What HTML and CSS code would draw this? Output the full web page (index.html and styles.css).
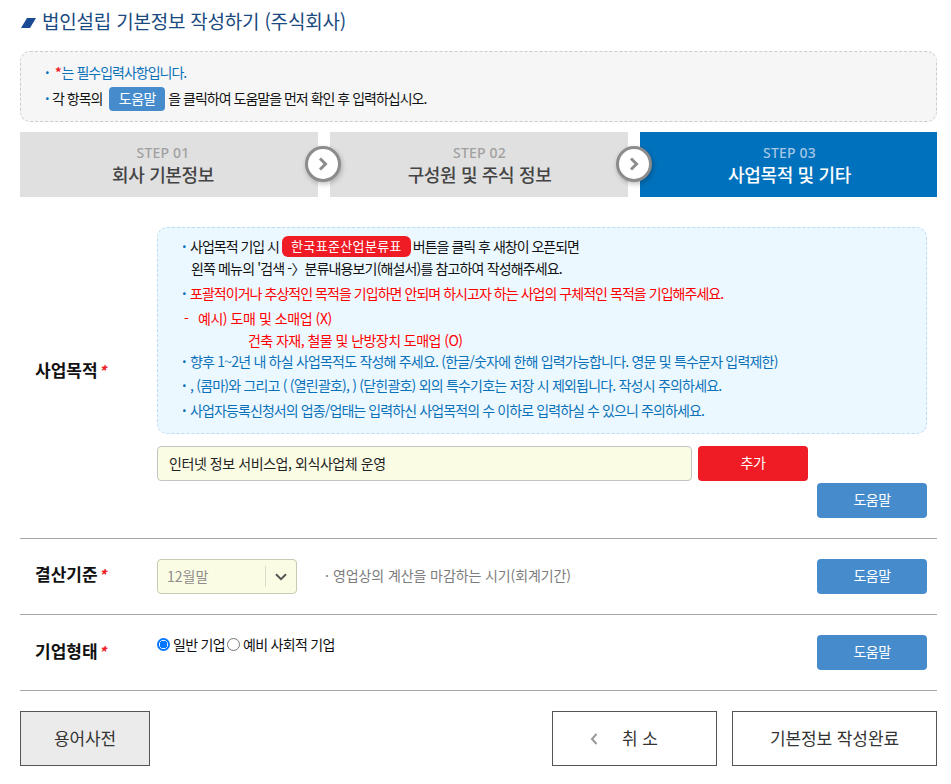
FILE: index.html
```html
<!DOCTYPE html>
<html lang="ko">
<head>
<meta charset="utf-8">
<title>법인설립 기본정보 작성하기</title>
<link rel="stylesheet" href="styles.css">
</head>
<body>
<main class="page">
  <h1 class="title"><svg class="title-mark" width="15" height="10" viewBox="0 0 15 10"><polygon points="0,10 6,0 15,0 9,10" fill="#1a4a94"/></svg>법인설립 기본정보 작성하기 (주식회사)</h1>

  <section class="notice">
    <p class="notice-line blue"><span class="dot">·</span><span class="star">*</span>는 필수입력사항입니다.</p>
    <p class="notice-line"><span class="dot blue">·</span>각 항목의 <span class="chip">도움말</span> 을 클릭하여 도움말을 먼저 확인 후 입력하십시오.</p>
  </section>

  <ol class="steps">
    <li class="step first"><span class="step-no">STEP 01</span><strong class="step-name">회사 기본정보</strong>
      <span class="step-arrow"><svg width="12" height="14" viewBox="0 0 12 14"><path d="M3 1.5 8.5 7 3 12.5" fill="none" stroke="#8c8c8c" stroke-width="3"/></svg></span></li>
    <li class="step second"><span class="step-no">STEP 02</span><strong class="step-name">구성원 및 주식 정보</strong>
      <span class="step-arrow"><svg width="12" height="14" viewBox="0 0 12 14"><path d="M3 1.5 8.5 7 3 12.5" fill="none" stroke="#8c8c8c" stroke-width="3"/></svg></span></li>
    <li class="step active"><span class="step-no">STEP 03</span><strong class="step-name">사업목적 및 기타</strong></li>
  </ol>

  <section class="row row-purpose">
    <div class="label">사업목적<span class="req">*</span></div>
    <div class="field">
      <div class="guide">
        <p class="g g1"><span class="dot blue">·</span>사업목적 기입 시 <span class="redchip">한국표준산업분류표</span> 버튼을 클릭 후 새창이 오픈되면</p>
        <p class="g g2 indent">왼쪽 메뉴의 '검색 -〉분류내용보기(해설서)를 참고하여 작성해주세요.</p>
        <p class="g g3 red"><span class="dot blue">·</span>포괄적이거나 추상적인 목적을 기입하면 안되며 하시고자 하는 사업의 구체적인 목적을 기입해주세요.</p>
        <p class="g g4 red"><span class="dash">-</span>예시) 도매 및 소매업 (X)</p>
        <p class="g g5 red deep">건축 자재, 철물 및 난방장치 도매업 (O)</p>
        <p class="g g6 blue"><span class="dot">·</span>향후 1~2년 내 하실 사업목적도 작성해 주세요. (한글/숫자에 한해 입력가능합니다. 영문 및 특수문자 입력제한)</p>
        <p class="g g7 blue"><span class="dot">·</span>, (콤마)와 그리고 ( (열린괄호), ) (닫힌괄호) 외의 특수기호는 저장 시 제외됩니다. 작성시 주의하세요.</p>
        <p class="g g8 blue"><span class="dot">·</span>사업자등록신청서의 업종/업태는 입력하신 사업목적의 수 이하로 입력하실 수 있으니 주의하세요.</p>
      </div>
      <div class="add-line">
        <div class="input">인터넷 정보 서비스업, 외식사업체 운영</div>
        <button class="btn-add" type="button">추가</button>
      </div>
      <div class="help-line"><button class="btn-help" type="button">도움말</button></div>
    </div>
  </section>

  <section class="row row-term">
    <div class="label">결산기준<span class="req">*</span></div>
    <div class="select"><span class="select-value">12월말</span><span class="select-arrow"><svg width="12" height="8" viewBox="0 0 12 8"><path d="M1 1.2 6 6.2 11 1.2" fill="none" stroke="#555" stroke-width="2"/></svg></span></div>
    <p class="hint"><span class="hint-dot">·</span>영업상의 계산을 마감하는 시기(회계기간)</p>
    <button class="btn-help" type="button">도움말</button>
  </section>

  <section class="row row-type">
    <div class="label">기업형태<span class="req">*</span></div>
    <div class="radios">
      <span class="radio on"></span><span class="radio-text">일반 기업</span><span class="radio"></span><span class="radio-text">예비 사회적 기업</span>
    </div>
    <button class="btn-help" type="button">도움말</button>
  </section>

  <footer class="actions">
    <button class="action dict" type="button">용어사전</button>
    <button class="action cancel" type="button"><svg width="8" height="12" viewBox="0 0 8 12"><path d="M6.5 1 2 6 6.5 11" fill="none" stroke="#999" stroke-width="2"/></svg><span>취 소</span></button>
    <button class="action done" type="button">기본정보 작성완료</button>
  </footer>
</main>
</body>
</html>
```

FILE: styles.css
```css
* { box-sizing: border-box; }
html, body { margin: 0; padding: 0; background: #fff; }
body { font-family: "Noto Sans CJK KR", "Noto Sans", sans-serif; color: #111; overflow: hidden; }
p, h1, ol { margin: 0; padding: 0; }
button { font-family: inherit; cursor: pointer; }
.page { width: 951px; height: 784px; padding: 0 14px 0 20px; }

.title { height: 51px; padding: 0 0 9px; font-size: 19px; line-height: 30px; font-weight: 400; letter-spacing: -0.22px; color: #1a4a80; display: flex; align-items: center; }
.title-mark { margin: 3px 6px 0 1px; flex: none; }

.notice { height: 71px; border: 1px dashed #ccc; border-radius: 10px; background: #f6f6f6; padding: 6px 0 0 22px; font-size: 14px; letter-spacing: -1px; }
.notice-line { display: flex; align-items: center; white-space: pre; height: 27px; }
.notice-line + .notice-line { height: 26px; }
.blue { color: #0b72b9; }
.red { color: #f00; }
.star { color: #ef1c25; font-weight: 700; margin: 0 1px 0 3px; font-size: 13px; }
.dot { width: 8px; display: inline-block; font-weight: 700; flex: none; }
.notice .dot { width: 9px; padding-left: 2px; }
.chip { display: inline-block; width: 56px; height: 24px; line-height: 23px; text-align: center; background: #468ccd; color: #fff; border-radius: 4px; margin: 2px 0 0 4px; letter-spacing: -0.5px; }

.steps { list-style: none; display: flex; gap: 12px; margin-top: 10px; height: 65px; }
.step { position: relative; flex: 298px 1 1; background: #e0e0e0; display: flex; flex-direction: column; align-items: center; padding-top: 11px; color: #444; }
.step.first { padding-right: 12px; }
.step.second { padding-left: 1px; }
.step.active { background: #0071bc; color: #fff; flex-basis: 297px; padding-left: 2px; }
.step-no { font-size: 14px; line-height: 20px; font-weight: 500; letter-spacing: 0.2px; color: #a0a0a0; font-family: "Noto Sans", sans-serif; }
.active .step-no { color: #a5c6e6; }
.step-name { font-size: 18px; line-height: 23px; font-weight: 500; letter-spacing: -0.35px; }
.step-arrow { position: absolute; right: -23px; top: 14px; z-index: 1; width: 36px; height: 36px; border: 3px solid #8c8c8c; border-radius: 50%; background: #fff; box-shadow: 1px 2px 5px rgba(0,0,0,.25); display: flex; align-items: center; justify-content: center; }
.second .step-arrow { right: -24px; }

.row { display: flex; border-bottom: 1px solid #a8a8a8; position: relative; }
.label { width: 137px; flex: none; padding-left: 15px; font-size: 17px; font-weight: 700; letter-spacing: 0; color: #111; }
.req { color: #ef1c25; font-size: 15px; margin-left: 1px; font-style: italic; }

.row-purpose { height: 342px; padding-top: 30px; }
.row-purpose .label { padding-top: 129px; line-height: 28px; }
.field { width: 770px; }
.guide { height: 207px; border: 1px dashed #bcdcf5; border-radius: 10px; background: #ecf8ff; padding: 6px 0 0 24px; font-size: 14px; letter-spacing: -1px; }
.g { white-space: pre; display: flex; align-items: center; height: 24px; }
.g2 { height: 20px; letter-spacing: -0.86px; }
.g3 { margin-top: 4px; height: 22px; letter-spacing: -0.96px; }
.g4 { margin: 3px 0 0 -2px; height: 22px; letter-spacing: -0.45px; }
.g5 { height: 22px; letter-spacing: -0.55px; }
.g6 { height: 22px; margin-top: -1px; letter-spacing: -0.8px; }
.g7 { height: 22px; margin-top: 2px; letter-spacing: -0.8px; }
.g8 { height: 22px; margin-top: 3px; letter-spacing: -0.9px; }
.indent { padding-left: 9px; }
.deep { padding-left: 66px; }
.g .dash { width: 18px; padding-left: 4px; color: #f00; }
.redchip { display: inline-block; height: 21px; line-height: 20px; width: 129px; text-align: center; background: #ef1c25; color: #fff; border-radius: 6px; font-size: 13px; letter-spacing: 0.35px; margin: 0 -1px 0 0; }

.add-line { display: flex; gap: 6px; margin-top: 12px; height: 35px; }
.input { width: 535px; height: 35px; border: 1px solid #c4c4c4; border-radius: 4px; background: #fbfce4; padding-left: 11px; font-size: 14px; line-height: 33px; letter-spacing: -0.43px; color: #222; }
.btn-add { width: 110px; height: 35px; border: 0; border-radius: 4px; background: #ef1c25; color: #fff; font-size: 14px; padding: 0 0 3px; letter-spacing: -0.5px; }
.help-line { display: flex; justify-content: flex-end; margin-top: 2px; }
.btn-help { width: 110px; height: 35px; border: 0; border-radius: 4px; background: #468ccd; color: #fff; font-size: 14px; padding: 0 0 3px; letter-spacing: -0.5px; flex: none; }

.row-term { height: 76px; padding-top: 20px; }
.row-term .label { line-height: 30px; }
.select { width: 140px; height: 35px; border: 1px solid #c9c9b4; border-radius: 4px; background: #fbfce4; display: flex; align-items: center; font-size: 14px; color: #8d8d8d; flex: none; }
.select-value { width: 108px; padding-left: 9px; height: 21px; line-height: 20px; border-right: 1px solid #dcdccb; }
.select-arrow { flex: 1; display: flex; justify-content: center; padding-top: 1px; }
.hint { margin-left: 28px; width: 492px; font-size: 14px; line-height: 32px; letter-spacing: -0.1px; color: #7c7c7c; white-space: pre; flex: none; }
.hint-dot { display: inline-block; width: 8px; }

.row-type { height: 76px; padding-top: 20px; }
.row-type .label { line-height: 32px; }
.radios { width: 660px; flex: none; display: flex; align-items: flex-start; font-size: 14px; letter-spacing: -0.7px; color: #111; }
.radio { width: 13px; height: 13px; margin: 3px 3px 0 0; border: 1px solid #767676; border-radius: 50%; background: #fff; flex: none; }
.radio.on { border: 2px solid #0075ff; background: radial-gradient(circle, #0075ff 0 3.6px, #fff 4px); }
.radio-text { line-height: 19px; margin-right: 2px; white-space: pre; }

.actions { display: flex; margin-top: 20px; }
.action { height: 55px; border: 1px solid #555; background: #fff; font-size: 17px; color: #333; letter-spacing: -0.1px; padding: 0 0 3px; }
.dict { width: 130px; background: #ebebeb; }
.cancel { width: 165px; margin-left: 402px; display: flex; align-items: center; padding-left: 37px; }
.cancel span { margin-left: 24px; }
.cancel svg { margin-top: 3px; }
.done { width: 205px; margin-left: 15px; }
```
